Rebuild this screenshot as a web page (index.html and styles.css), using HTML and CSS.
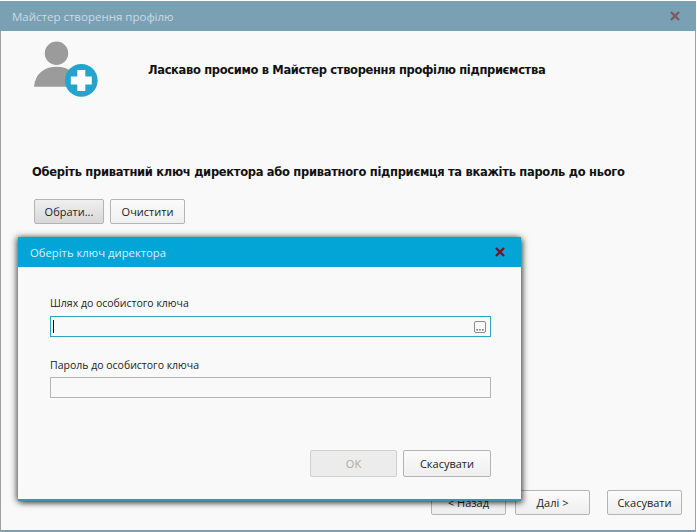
FILE: index.html
```html
<!DOCTYPE html>
<html lang="uk">
<head>
<meta charset="utf-8">
<title>Майстер створення профілю</title>
<link rel="stylesheet" href="styles.css">
</head>
<body>
<div class="window">
  <div class="titlebar main-title">
    <span>Майстер створення профілю</span>
    <svg class="close" width="10" height="10" viewBox="0 0 10 10"><path d="M1 1 9 9M9 1 1 9" stroke="#7d5a68" stroke-width="2.4"/></svg>
  </div>
  <div class="content">
    <div class="welcome">
      <svg class="avatar" width="66" height="56" viewBox="0 0 66 56">
        <circle cx="22.500" cy="12.300" r="11.700" fill="#9b9b9b"/>
        <path d="M0 45.700C1 33 10 25.700 22.500 25.700C35 25.700 44 33 46 45.700Z" fill="#9b9b9b"/>
        <circle cx="47.300" cy="39.400" r="16.300" fill="#24a3cd"/>
        <path d="M43.300 28.900h8v6.500h6.500v8h-6.500v6.500h-8v-6.500h-6.500v-8h6.500z" fill="#fff"/>
      </svg>
      <h1>Ласкаво просимо в Майстер створення профілю підприємства</h1>
    </div>
    <h2>Оберіть приватний ключ директора або приватного підприємця та вкажіть пароль до нього</h2>
    <div class="actions">
      <button class="btn pressed">Обрати...</button>
      <button class="btn">Очистити</button>
    </div>
    <div class="spacer"></div>
    <div class="footer">
      <button class="btn nav">&lt; Назад</button>
      <button class="btn nav">Далі &gt;</button>
      <button class="btn nav">Скасувати</button>
    </div>
  </div>
  <div class="dialog">
    <div class="titlebar dialog-title">
      <span>Оберіть ключ директора</span>
      <svg class="close" width="10" height="10" viewBox="0 0 10 10"><path d="M1 1 9 9M9 1 1 9" stroke="#7a1226" stroke-width="2.400"/></svg>
    </div>
    <div class="dialog-body">
      <label class="field-label">Шлях до особистого ключа</label>
      <div class="input focused">
        <span class="caret"></span>
        <svg class="browse" width="12" height="12" viewBox="0 0 12 12"><rect x=".5" y=".5" width="11" height="11" rx="1.500" fill="none" stroke="#8a8a8a"/><path d="M2.500 8h1.500v1.500h-1.500zM5.200 8h1.500v1.500h-1.500zM8 8h1.500v1.500h-1.500z" fill="#6d6d6d"/></svg>
      </div>
      <label class="field-label second">Пароль до особистого ключа</label>
      <div class="input second-input"></div>
      <div class="dialog-spacer"></div>
      <div class="dialog-actions">
        <button class="btn ok" disabled>OK</button>
        <button class="btn cancel">Скасувати</button>
      </div>
    </div>
  </div>
</div>
</body>
</html>
```
FILE: styles.css
```css
* { box-sizing: border-box; }
html, body { margin: 0; height: 100%; background: #fff; }
body { padding: 1px 1px 0 0; overflow: hidden; }
.window {
  position: relative;
  width: 696px;
  height: 531px;
  border-left: 1px solid #a0a0a0;
  border-right: 1px solid #a0a0a0;
  border-bottom: 2px solid #7aa1b3;
  background: #f9f9f9;
  display: flex;
  flex-direction: column;
  font-family: "Open Sans", sans-serif;
  font-size: 10.5px;
  color: #222;
}
.titlebar {
  height: 30px;
  flex: none;
  display: flex;
  align-items: center;
  justify-content: space-between;
}
.main-title { background: #7aa1b3; color: #c9dbe3; font-size: 11.5px; padding: 0 16px 0 12px; margin: 0 -1px; }
.content { flex: 1; display: flex; flex-direction: column; padding: 10px 13px 15px 31px; }
.welcome { display: flex; align-items: flex-start; height: 62px; }
.avatar { display: block; margin-left: 2px; flex: none; }
h1 { margin: 19px 0 0 48px; font: bold 11.5px/20px "DejaVu Sans", sans-serif; letter-spacing: -.34px; color: #111; white-space: nowrap; }
h2 { margin: 59px 0 0; font: bold 11.5px/20px "DejaVu Sans", sans-serif; letter-spacing: -.3px; color: #111; white-space: nowrap; }
.actions { display: flex; gap: 6px; margin: 17px 0 0 2px; }
.btn {
  height: 25px;
  border: 1px solid #b4b4b4;
  border-radius: 2px;
  background: linear-gradient(#fbfbfb, #efefef);
  font: 11px "Open Sans", sans-serif;
  color: #222;
  padding: 0;
  width: 75px;
}
.btn.pressed { width: 70px; background: linear-gradient(#efefef, #d8d8d8); }
.spacer { flex: 1; }
.footer { display: flex; justify-content: flex-end; }
.nav:nth-child(1) { margin-right: 9px; }
.nav:nth-child(2) { margin-right: 17px; }
.dialog {
  position: absolute;
  left: 17px;
  top: 236px;
  width: 503px;
  height: 264px;
  background: #f9f9f9;
  border-bottom: 2px solid #3a93ae;
  box-shadow: -2px 0 6px rgba(0,0,0,.5), 2px 2px 6px rgba(0,0,0,.6);
  display: flex;
  flex-direction: column;
}
.dialog-title { background: #03a5d6; color: #d8f0f8; font-size: 11.3px; padding: 0 16px 0 12px; }
.dialog-body { flex: 1; display: flex; flex-direction: column; padding: 29px 30px 22px 32px; }
.field-label { line-height: 15px; display: block; color: #222; }
.second { margin-top: 21px; }
.input {
  position: relative;
  height: 21px;
  margin-top: 5px;
  border: 1px solid #b4b4b4;
  background: #f9f9f9;
}
.second-input { margin-top: 4px; }
.input.focused { border-color: #2fa3bd; display: flex; align-items: center; justify-content: space-between; padding: 0 4px 0 2px; }
.caret { width: 1px; height: 13px; background: #111; }
.dialog-spacer { flex: 1; }
.dialog-actions { display: flex; justify-content: flex-end; gap: 6px; }
.ok { width: 87px; height: 27px; background: #ececec; color: #aaa; border-color: #cfcfcf; }
.cancel { width: 88px; height: 27px; }
```
